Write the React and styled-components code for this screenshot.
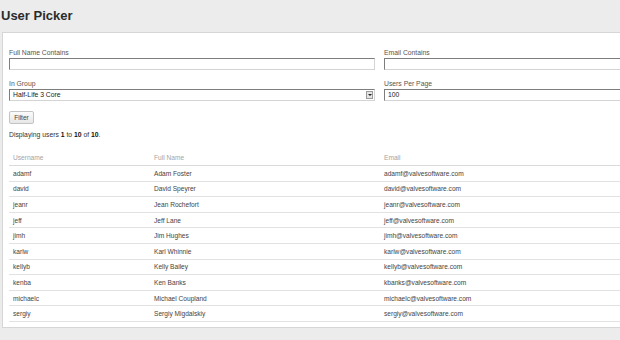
import styled, { createGlobalStyle } from 'styled-components';

const GlobalStyle = createGlobalStyle`
  body {
    margin: 0;
    background-color: #ececec;
    font-family: "Liberation Sans", Arial, sans-serif;
    overflow: hidden;
  }
`;

const Title = styled.h1`
  margin: 0;
  padding: 8px 0 0 1px;
  height: 32px;
  box-sizing: border-box;
  font-size: 13px;
  font-weight: bold;
  color: #2b2b2b;
`;

const Panel = styled.div`
  margin-left: 2px;
  width: 800px;
  height: 296px;
  box-sizing: border-box;
  background-color: #fff;
  border: 1px solid #d6d6d6;
  padding: 15px 0 0 6px;
`;

const FormGrid = styled.div`
  display: grid;
  grid-template-columns: 366px 366px;
  column-gap: 9px;
  row-gap: 9px;
`;

const Field = styled.div`
  display: flex;
  flex-direction: column;
`;

const Label = styled.label`
  font-size: 6.8px;
  color: #555;
  line-height: 9px;
  margin-bottom: 1px;
`;

const TextBox = styled.div`
  height: 12px;
  box-sizing: border-box;
  border: 1px solid;
  border-color: #7d7d7d #d4d4d4 #d4d4d4 #7d7d7d;
  border-top-width: 1.5px;
  font-size: 6.8px;
  line-height: 10px;
  color: #222;
  padding-left: 3px;
  display: flex;
  align-items: center;
  justify-content: space-between;
`;

const Arrow = styled.span`
  width: 7px;
  height: 8px;
  margin-right: 1px;
  box-sizing: border-box;
  border: 1px solid #9a9a9a;
  background: #e4e4e4;
  display: flex;
  align-items: center;
  justify-content: center;

  &::after {
    content: '';
    border-left: 2px solid transparent;
    border-right: 2px solid transparent;
    border-top: 2px solid #222;
  }
`;

const FilterButton = styled.button`
  margin-top: 10px;
  margin-left: 0;
  width: 25px;
  height: 13px;
  padding: 0;
  font-family: inherit;
  font-size: 6.5px;
  color: #444;
  background: linear-gradient(#fbfbfb, #e6e6e6);
  border: 1px solid #c4c4c4;
  border-radius: 2px;
`;

const Summary = styled.p`
  margin: 6px 0 0 0;
  font-size: 6.8px;
  color: #333;
  line-height: 9px;

  b {
    font-weight: bold;
    color: #111;
  }
`;

const Table = styled.table`
  margin-top: 11px;
  width: 790px;
  table-layout: fixed;
  border-collapse: collapse;
  font-size: 6.6px;
`;

const HeadCell = styled.th`
  text-align: left;
  font-weight: normal;
  color: #a4a4a4;
  height: 15px;
  padding: 0 0 0 4px;
  border-bottom: 1.5px solid #dadada;
  width: ${(p) => (p.$w ? `${p.$w}px` : 'auto')};
`;

const Row = styled.tr`
  height: 15.6px;
  border-bottom: 1px solid #e2e2e2;
`;

const Cell = styled.td`
  padding: 0 0 0 4px;
  color: #444;
  white-space: nowrap;
`;

const users = [
  ['adamf', 'Adam Foster', 'adamf@valvesoftware.com'],
  ['david', 'David Speyrer', 'david@valvesoftware.com'],
  ['jeanr', 'Jean Rochefort', 'jeanr@valvesoftware.com'],
  ['jeff', 'Jeff Lane', 'jeff@valvesoftware.com'],
  ['jimh', 'Jim Hughes', 'jimh@valvesoftware.com'],
  ['karlw', 'Karl Whinnie', 'karlw@valvesoftware.com'],
  ['kellyb', 'Kelly Bailey', 'kellyb@valvesoftware.com'],
  ['kenba', 'Ken Banks', 'kbanks@valvesoftware.com'],
  ['michaelc', 'Michael Coupland', 'michaelc@valvesoftware.com'],
  ['sergiy', 'Sergiy Migdalskiy', 'sergiy@valvesoftware.com'],
];

const App = () => {
  return (
    <>
      <GlobalStyle />
      <Title>User Picker</Title>
      <Panel>
        <FormGrid>
          <Field>
            <Label>Full Name Contains</Label>
            <TextBox />
          </Field>
          <Field>
            <Label>Email Contains</Label>
            <TextBox />
          </Field>
          <Field>
            <Label>In Group</Label>
            <TextBox>
              Half-Life 3 Core
              <Arrow />
            </TextBox>
          </Field>
          <Field>
            <Label>Users Per Page</Label>
            <TextBox>100</TextBox>
          </Field>
        </FormGrid>
        <FilterButton type="button">Filter</FilterButton>
        <Summary>
          Displaying users <b>1</b> to <b>10</b> of <b>10</b>.
        </Summary>
        <Table>
          <thead>
            <tr>
              <HeadCell $w={137}>Username</HeadCell>
              <HeadCell $w={226}>Full Name</HeadCell>
              <HeadCell>Email</HeadCell>
            </tr>
          </thead>
          <tbody>
            {users.map(([name, full, email]) => (
              <Row key={name}>
                <Cell>{name}</Cell>
                <Cell>{full}</Cell>
                <Cell>{email}</Cell>
              </Row>
            ))}
          </tbody>
        </Table>
      </Panel>
    </>
  );
};

export default App;
